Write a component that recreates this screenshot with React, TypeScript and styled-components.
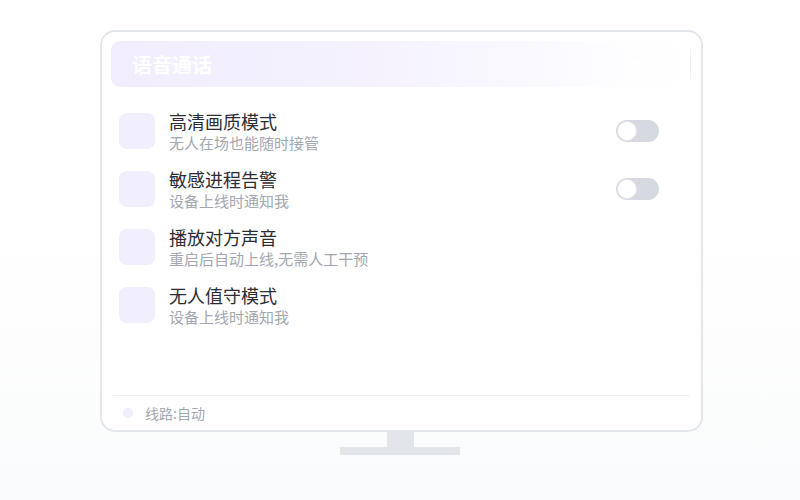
import React from 'react';
import styled, { createGlobalStyle } from 'styled-components';

const GlobalStyle = createGlobalStyle`
  html, body {
    margin: 0;
    padding: 0;
  }
  body {
    width: 800px;
    height: 500px;
    overflow: hidden;
    font-family: "Noto Sans CJK SC", "Noto Sans", sans-serif;
    background: linear-gradient(180deg, #ffffff 0%, #ffffff 45%, #fafbfc 100%);
  }
`;

const Stage = styled.div`
  display: flex;
  flex-direction: column;
  align-items: center;
  padding-top: 30px;
`;

const Screen = styled.div`
  box-sizing: border-box;
  width: 603px;
  height: 402px;
  margin-left: 3px;
  border: 2px solid #e3e6eb;
  border-radius: 15px;
  background: #fff;
  padding: 9px 9px 0 9px;
  display: flex;
  flex-direction: column;
`;

const Header = styled.div`
  height: 46px;
  border-radius: 9px;
  background: linear-gradient(90deg, #f1edfe 0%, #f5f2fe 45%, #fdfcff 85%, #ffffff 100%);
  display: flex;
  align-items: center;
  padding: 0 1px 0 21px;
`;

const Title = styled.div`
  color: #ffffff;
  font-size: 20px;
  font-weight: 700;
  flex: 1;
`;

const Dot = styled.span<{ $size: number }>`
  width: ${p => p.$size}px;
  height: ${p => p.$size}px;
  border-radius: 50%;
  background: rgba(255, 255, 255, 0.9);
  margin-left: 5px;
`;

const Bar = styled.span`
  width: 1px;
  height: 30px;
  background: rgba(238, 239, 244, 0.9);
  margin-left: 40px;
`;

const List = styled.div`
  flex: 1;
  display: flex;
  flex-direction: column;
  gap: 22px;
  padding: 26px 33px 0 8px;
`;

const Row = styled.div`
  display: flex;
  align-items: center;
  height: 36px;
`;

const IconBox = styled.div`
  width: 36px;
  height: 36px;
  border-radius: 8px;
  background: #f1eefd;
  flex-shrink: 0;
`;

const Texts = styled.div`
  flex: 1;
  margin-left: 14px;
  display: flex;
  flex-direction: column;
`;

const RowTitle = styled.div`
  font-size: 18px;
  line-height: 22px;
  color: #2b2d33;
`;

const RowSub = styled.div`
  font-size: 15px;
  line-height: 21px;
  color: #a3a7b0;
`;

const Switch = styled.div<{ $on?: boolean }>`
  box-sizing: border-box;
  width: 43px;
  height: 22px;
  border-radius: 11px;
  background: ${p => (p.$on ? '#8b7cf6' : '#d6d9e0')};
  padding: 1px;
  display: flex;
  justify-content: ${p => (p.$on ? 'flex-end' : 'flex-start')};
`;

const Knob = styled.div`
  box-sizing: border-box;
  width: 20px;
  height: 20px;
  border-radius: 50%;
  background: #fff;
  border: 1px solid #e6e8ec;
`;

const Footer = styled.div`
  border-top: 1px solid #eef0f3;
  margin: 0 2px;
  height: 34px;
  display: flex;
  align-items: center;
  padding-left: 10px;
  gap: 12px;
`;

const FooterDot = styled.span`
  width: 10px;
  height: 10px;
  border-radius: 50%;
  background: #efecfd;
`;

const FooterText = styled.span`
  font-size: 14px;
  color: #a3a7b0;
`;

const Neck = styled.div`
  width: 27px;
  height: 15px;
  background: #e2e5ea;
`;

const Base = styled.div`
  width: 120px;
  height: 8px;
  background: #e2e5ea;
`;

const rows = [
  { title: '高清画质模式', sub: '无人在场也能随时接管', toggle: true },
  { title: '敏感进程告警', sub: '设备上线时通知我', toggle: true },
  { title: '播放对方声音', sub: '重启后自动上线,无需人工干预', toggle: false },
  { title: '无人值守模式', sub: '设备上线时通知我', toggle: false },
];

export default function App() {
  return (
    <>
      <GlobalStyle />
      <Stage>
        <Screen>
          <Header>
            <Title>语音通话</Title>
            <Dot $size={8} />
            <Dot $size={8} />
            <Bar />
          </Header>
          <List>
            {rows.map(r => (
              <Row key={r.title}>
                <IconBox />
                <Texts>
                  <RowTitle>{r.title}</RowTitle>
                  <RowSub>{r.sub}</RowSub>
                </Texts>
                {r.toggle && (
                  <Switch>
                    <Knob />
                  </Switch>
                )}
              </Row>
            ))}
          </List>
          <Footer>
            <FooterDot />
            <FooterText>线路:自动</FooterText>
          </Footer>
        </Screen>
        <Neck />
        <Base />
      </Stage>
    </>
  );
}
